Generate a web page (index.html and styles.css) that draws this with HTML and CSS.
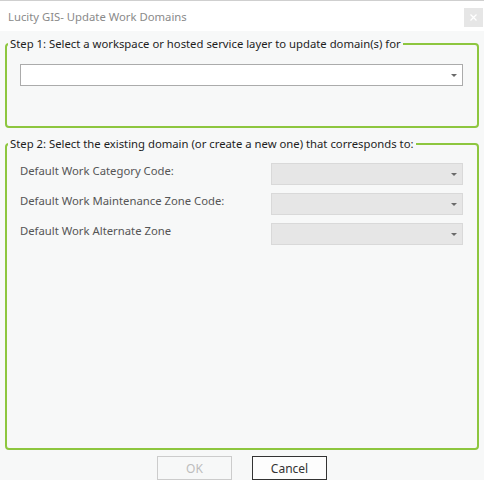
FILE: index.html
```html
<!DOCTYPE html>
<html>
<head>
<meta charset="utf-8">
<title>Lucity GIS- Update Work Domains</title>
<link rel="stylesheet" href="styles.css">
</head>
<body>
<div class="dialog">
  <div class="titlebar">
    <span class="title">Lucity GIS- Update Work Domains</span>
    <button class="close" type="button" aria-label="Close">
      <svg width="7" height="7" viewBox="0 0 7 7"><path d="M0.5 0.5L6.5 6.5M6.5 0.5L0.5 6.5" stroke="#ffffff" stroke-width="1.3" fill="none"/></svg>
    </button>
  </div>
  <fieldset class="group group-one">
    <legend class="legend">Step 1: Select a workspace or hosted service layer to update domain(s) for</legend>
    <div class="combo">
      <span class="arrow"></span>
    </div>
  </fieldset>
  <fieldset class="group group-two">
    <legend class="legend">Step 2: Select the existing domain (or create a new one) that corresponds to:</legend>
    <div class="rows">
      <span class="label">Default Work Category Code:</span>
      <div class="combo disabled"><span class="arrow"></span></div>
      <span class="label">Default Work Maintenance Zone Code:</span>
      <div class="combo disabled"><span class="arrow"></span></div>
      <span class="label">Default Work Alternate Zone</span>
      <div class="combo disabled"><span class="arrow"></span></div>
    </div>
  </fieldset>
  <div class="footer">
    <button class="btn btn-disabled" type="button">OK</button>
    <button class="btn btn-cancel" type="button">Cancel</button>
  </div>
</div>
</body>
</html>
```
FILE: styles.css
```css
html, body {
  margin: 0;
  padding: 0;
}
body {
  width: 484px;
  height: 480px;
  overflow: hidden;
  background: #f7f8f8;
  font-family: "Noto Sans", "Open Sans", sans-serif;
  font-size: 11.3px;
}
.dialog {
  height: 480px;
  display: flex;
  flex-direction: column;
  box-sizing: border-box;
  border-top: 1px solid #cfcfcf;
}
.titlebar {
  height: 30px;
  flex: none;
  background: #ffffff;
  display: flex;
  justify-content: space-between;
  align-items: flex-start;
  box-sizing: border-box;
}
.title {
  color: #8a8a8a;
  line-height: 16px;
  margin: 8px 0 0 8px;
}
.close {
  width: 19px;
  height: 19px;
  margin: 7px 1px 0 0;
  padding: 0;
  border: none;
  background: #e6e6e6;
  display: flex;
  align-items: center;
  justify-content: center;
}
.group {
  margin: 0 5px;
  border: 2px solid #8dc63f;
  border-radius: 4px;
  padding: 12px 14px 40px 13px;
  min-width: 0;
}
.group-one {
  margin-top: 5px;
  flex: none;
}
.group-two {
  margin-top: 8px;
  flex: 1;
  padding-top: 11px;
  padding-bottom: 0;
}
.legend {
  color: #1e1e1e;
  line-height: 16px;
  padding: 0 2px;
  margin-left: -12px;
}
.combo {
  height: 22px;
  box-sizing: border-box;
  border: 1px solid #ababab;
  background: #ffffff;
  position: relative;
}
.combo.disabled {
  background: #e6e6e6;
  border-color: #d9d9d9;
}
.arrow {
  position: absolute;
  right: 5px;
  top: 9px;
  width: 0;
  height: 0;
  border-left: 3px solid transparent;
  border-right: 3px solid transparent;
  border-top: 3px solid #6a6a6a;
}
.rows {
  display: grid;
  grid-template-columns: 1fr 192px;
  row-gap: 8px;
  align-items: start;
}
.label {
  color: #555555;
  line-height: 16px;
}
.footer {
  flex: none;
  height: 24px;
  margin-top: 6px;
  display: flex;
  justify-content: center;
  gap: 20px;
}
.btn {
  width: 75px;
  height: 24px;
  box-sizing: border-box;
  font-family: inherit;
  font-size: 12px;
  padding: 0;
}
.btn-disabled {
  border: 1px solid #cccccc;
  background: #f7f8f8;
  color: #bdbdbd;
}
.btn-cancel {
  border: 1px solid #333333;
  background: #fdfdfd;
  color: #333333;
}
```
